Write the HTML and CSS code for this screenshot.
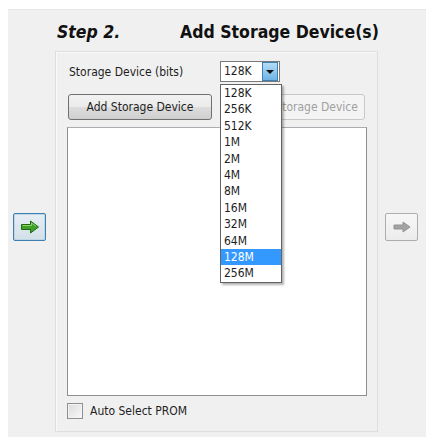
FILE: index.html
```html
<!DOCTYPE html>
<html lang="en">
<head>
    <meta charset="UTF-8">
    <meta name="viewport" content="width=device-width, initial-scale=1.0">
    <title>Add Storage Device(s)</title>
    <link rel="stylesheet" href="styles.css">
</head>
<body>

    <div class="wizard">
        <div class="side side-left">
            <button class="nav nav-focus">
                <svg width="20" height="14" viewBox="0 0 20 14">
                    <path d="M1.5 4.5 H10.5 V1 L18.5 7 L10.5 13 V9.5 H1.5 Z" fill="#3fa12a" stroke="#1e6b12" stroke-width="1" stroke-linejoin="round"/>
                    <path d="M2.5 5.5 H11.5 V3 L16 6.3" fill="none" stroke="#8fd46f" stroke-width="1"/>
                </svg>
            </button>
        </div>

        <div class="main">
            <div class="title">
                <span class="step">Step 2.</span>
                <span class="heading">Add Storage Device(s)</span>
            </div>

            <div class="panel">
                <div class="row">
                    <span class="label">Storage Device (bits)</span>
                    <div class="combo">
                        <span class="combo-value">128K</span>
                        <span class="combo-btn"><span class="tri"></span></span>

                        <ul class="dropdown">
                            <li>128K</li>
                            <li>256K</li>
                            <li>512K</li>
                            <li>1M</li>
                            <li>2M</li>
                            <li>4M</li>
                            <li>8M</li>
                            <li>16M</li>
                            <li>32M</li>
                            <li>64M</li>
                            <li class="selected">128M</li>
                            <li>256M</li>
                        </ul>
                    </div>
                </div>

                <div class="row buttons">
                    <button class="btn">Add Storage Device</button>
                    <button class="btn" disabled>Remove Storage Device</button>
                </div>

                <div class="listbox"></div>

                <label class="check">
                    <span class="box"></span>
                    Auto Select PROM
                </label>
            </div>
        </div>

        <div class="side side-right">
            <button class="nav">
                <svg width="20" height="14" viewBox="0 0 20 14">
                    <path d="M2 5 H11 V2 L18 7 L11 12 V9 H2 Z" fill="#a3a3a3" stroke="#939393" stroke-width="1" stroke-linejoin="round"/>
                </svg>
            </button>
        </div>
    </div>

</body>
</html>
```

FILE: styles.css
```css
*{
    margin: 0;
    padding: 0;
    box-sizing: border-box;
}

body{
    background-color: white;
    font-family: "DejaVu Sans Condensed", "DejaVu Sans", sans-serif;
    font-size: 12px;
    color: #1e1e1e;
}

.wizard{
    display: flex;
    width: 418px;
    height: 428px;
    margin: 9px 0 0 8px;
    background-color: #f0f0f0;
    border-top: 1px solid #e6e6e6;
}

.side-left{
    width: 47px;
    padding: 203px 0 0 5px;
}

.side-right{
    width: 48px;
    padding: 203px 0 0 7px;
}

.nav{
    display: flex;
    align-items: center;
    justify-content: center;
    width: 33px;
    height: 28px;
    border: 1px solid #adadad;
    border-radius: 2px;
    background: linear-gradient(#f7f7f7, #ececec);
}

.nav-focus{
    border-color: #3c7fb1;
    background: linear-gradient(#e6eef4, #d3dfe8);
    box-shadow: inset 0 0 0 1px #bfd6e8;
}

.main{
    width: 323px;
    padding-top: 12px;
}

.title{
    display: flex;
    height: 21px;
    line-height: 21px;
    margin-bottom: 8px;
    padding-left: 2px;
    font-size: 17.5px;
    font-weight: bold;
    color: #111;
    white-space: nowrap;
}

.step{
    flex: none;
    width: 123px;
    font-style: italic;
}

.heading{
    flex: none;
}

.panel{
    height: 381px;
    padding: 9px 11px 0 12px;
    border: 1px solid #dedede;
    box-shadow: inset 1px 1px 0 #fafafa;
}

.row{
    display: flex;
    align-items: center;
}

.label{
    width: 152px;
    padding-left: 1px;
}

.combo{
    position: relative;
    display: flex;
    width: 60px;
    height: 21px;
    border: 1px solid #7a7a7a;
    background-color: white;
}

.combo-value{
    flex: 1;
    padding-left: 3px;
    line-height: 19px;
}

.combo-btn{
    display: flex;
    align-items: center;
    justify-content: center;
    width: 16px;
    margin: 0 1px 0 0;
    border: 1px solid #3c7fb1;
    background: linear-gradient(#b5dcf6, #6fb3e6);
}

.tri{
    border-left: 4px solid transparent;
    border-right: 4px solid transparent;
    border-top: 4px solid #111;
}

.dropdown{
    position: absolute;
    top: 22px;
    left: -1px;
    width: 62px;
    list-style: none;
    background-color: white;
    border: 1px solid #646464;
    box-shadow: 2px 2px 2px rgba(0,0,0,0.3);
    z-index: 2;
}

.dropdown li{
    height: 16.4px;
    line-height: 16.4px;
    padding-left: 3px;
}

.dropdown .selected{
    background-color: #3399ff;
    color: white;
}

.buttons{
    gap: 9px;
    margin-top: 12px;
}

.btn{
    width: 144px;
    height: 26px;
    font-family: inherit;
    font-size: 12px;
    color: #1e1e1e;
    border: 1px solid #707070;
    border-radius: 3px;
    background: linear-gradient(#f2f2f2 0%, #ebebeb 50%, #dddddd 51%, #cfcfcf 100%);
}

.btn:disabled{
    color: #a0a0a0;
    border-color: #c8c8c8;
    background: #f4f4f4;
}

.listbox{
    width: 300px;
    height: 269px;
    margin: 7px 0 0 -1px;
    background-color: white;
    border: 1px solid #8e8f8f;
    border-top-color: #abadb3;
}

.check{
    display: flex;
    align-items: center;
    gap: 7px;
    margin: 7px 0 0 -1px;
}

.box{
    width: 16px;
    height: 16px;
    border: 1px solid #8e8f8f;
    background: linear-gradient(135deg, #dcdcdc, #f8f8f8);
    box-shadow: inset 0 0 0 1px #f4f4f4;
}
```
